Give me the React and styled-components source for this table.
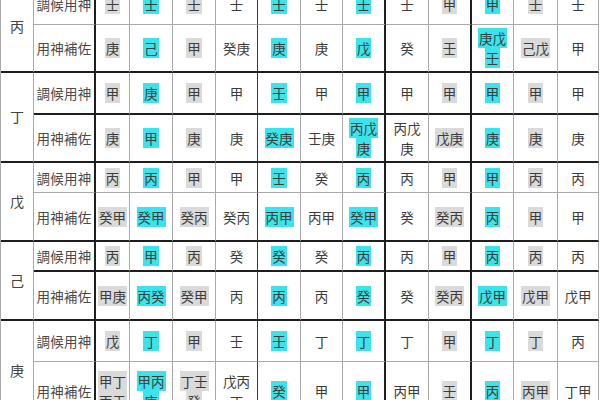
import React from 'react';
import styled, { createGlobalStyle } from 'styled-components';

const GlobalStyle = createGlobalStyle`
  html, body {
    margin: 0;
    padding: 0;
    background: #fff;
    overflow: hidden;
  }
  body {
    font-family: "Noto Sans CJK TC", "Noto Sans CJK SC", sans-serif;
  }
`;

// column widths, left to right
const COLS = [33, 62, 34, 43, 43, 42, 43, 42, 43, 43, 43, 42, 44, 41];

// right border for each column: 'dark' | 'mid' | 'light'
const COL_LINES = ['light', 'dark', 'light', 'light', 'light', 'mid', 'light', 'light', 'dark', 'light', 'dark', 'light', 'light', 'light'];

const GRAY_COLS = [0, 2, 8, 10];
const CYAN_COLS = [1, 4, 6, 9];

const groups = [
  {
    stem: '丙',
    rows: [
      { label: '調候用神', h: 42, line: 'light', cells: ['壬', '壬', '壬', '壬', '壬', '壬', '壬', '壬', '甲', '甲', '壬', '壬'] },
      { label: '用神補佐', h: 48, cells: ['庚', '己', '甲', '癸庚', '庚', '庚', '戊', '癸', '壬', '庚戊/壬', '己戊', '甲'] },
    ],
  },
  {
    stem: '丁',
    rows: [
      { label: '調候用神', h: 42, line: 'dark', cells: ['甲', '庚', '甲', '甲', '壬', '甲', '甲', '甲', '甲', '甲', '甲', '甲'] },
      { label: '用神補佐', h: 48, cells: ['庚', '甲', '庚', '庚', '癸庚', '壬庚', '丙戊/庚', '丙戊/庚', '戊庚', '庚', '庚', '庚'] },
    ],
  },
  {
    stem: '戊',
    rows: [
      { label: '調候用神', h: 30, line: 'light', cells: ['丙', '丙', '甲', '甲', '壬', '癸', '丙', '丙', '甲', '甲', '丙', '丙'] },
      { label: '用神補佐', h: 49, cells: ['癸甲', '癸甲', '癸丙', '癸丙', '丙甲', '丙甲', '癸甲', '癸', '癸丙', '丙', '甲', '甲'] },
    ],
  },
  {
    stem: '己',
    rows: [
      { label: '調候用神', h: 30, line: 'dark', cells: ['丙', '甲', '丙', '癸', '癸', '癸', '丙', '丙', '甲', '丙', '丙', '丙'] },
      { label: '用神補佐', h: 49, cells: ['甲庚', '丙癸', '癸甲', '丙', '丙', '丙', '癸', '癸', '癸丙', '戊甲', '戊甲', '戊甲'] },
    ],
  },
  {
    stem: '庚',
    rows: [
      { label: '調候用神', h: 41, line: 'light', cells: ['戊', '丁', '甲', '壬', '壬', '丁', '丁', '丁', '甲', '丁', '丁', '丙'] },
      { label: '用神補佐', h: 60, cells: ['甲丁/丙壬', '甲丙/庚', '丁壬/癸', '戊丙/丁', '癸', '甲', '甲', '丙甲', '壬', '丙', '丙甲', '丁甲'] },
    ],
  },
];

const lineColor = (kind) => (kind === 'dark' ? '#1e1e1e' : kind === 'mid' ? '#3a3a3a' : '#a9a9a9');
const lineWidth = (kind) => (kind === 'dark' ? 2 : 1);

const Table = styled.div`
  display: grid;
  grid-template-columns: ${COLS.map((w) => `${w}px`).join(' ')};
  grid-template-rows: ${(p) => p.$rows};
  margin-top: -17px;
  border-left: 1px solid #a9a9a9;
  width: 598px;
  box-sizing: border-box;
`;

const Cell = styled.div`
  box-sizing: border-box;
  display: flex;
  flex-direction: column;
  align-items: center;
  justify-content: center;
  border-right: ${(p) => lineWidth(p.$right)}px solid ${(p) => lineColor(p.$right)};
  border-bottom: ${(p) => lineWidth(p.$bottom)}px solid ${(p) => lineColor(p.$bottom)};
  color: #3c3c3c;
  font-size: 13.5px;
  line-height: 20px;
`;

const StemCell = styled(Cell)`
  grid-row: span 2;
  color: #444;
  font-size: 14px;
  padding-bottom: 2px;
`;

const LabelCell = styled(Cell)`
  color: #4a4a4a;
  font-size: 13.5px;
  letter-spacing: 0.2px;
`;

const Mark = styled.span`
  display: inline-block;
  padding: 0 1px;
  line-height: 20px;
  white-space: nowrap;
  background: ${(p) => (p.$tone === 'cyan' ? '#3ae4ec' : p.$tone === 'gray' ? '#dadada' : 'transparent')};
`;

const Lines = styled.div`
  display: flex;
  flex-direction: column;
  align-items: center;
`;

function DataCell({ text, col, bottom }) {
  const tone = GRAY_COLS.includes(col) ? 'gray' : CYAN_COLS.includes(col) ? 'cyan' : 'none';
  const parts = text.split('/');
  return (
    <Cell $right={COL_LINES[col + 2]} $bottom={bottom}>
      <Lines>
        {parts.map((t, i) => (
          <Mark key={i} $tone={tone}>{t}</Mark>
        ))}
      </Lines>
    </Cell>
  );
}

export default function App() {
  const rows = groups.flatMap((g) => g.rows.map((r) => `${r.h}px`)).join(' ');
  return (
    <>
      <GlobalStyle />
      <Table $rows={rows}>
        {groups.map((g) =>
          g.rows.map((r, ri) => {
            const bottom = ri === 1 ? 'dark' : r.line;
            return (
              <React.Fragment key={g.stem + ri}>
                {ri === 0 && (
                  <StemCell $right={COL_LINES[0]} $bottom="dark">{g.stem}</StemCell>
                )}
                <LabelCell $right={COL_LINES[1]} $bottom={bottom}>{r.label}</LabelCell>
                {r.cells.map((c, ci) => (
                  <DataCell key={ci} text={c} col={ci} bottom={bottom} />
                ))}
              </React.Fragment>
            );
          })
        )}
      </Table>
    </>
  );
}
